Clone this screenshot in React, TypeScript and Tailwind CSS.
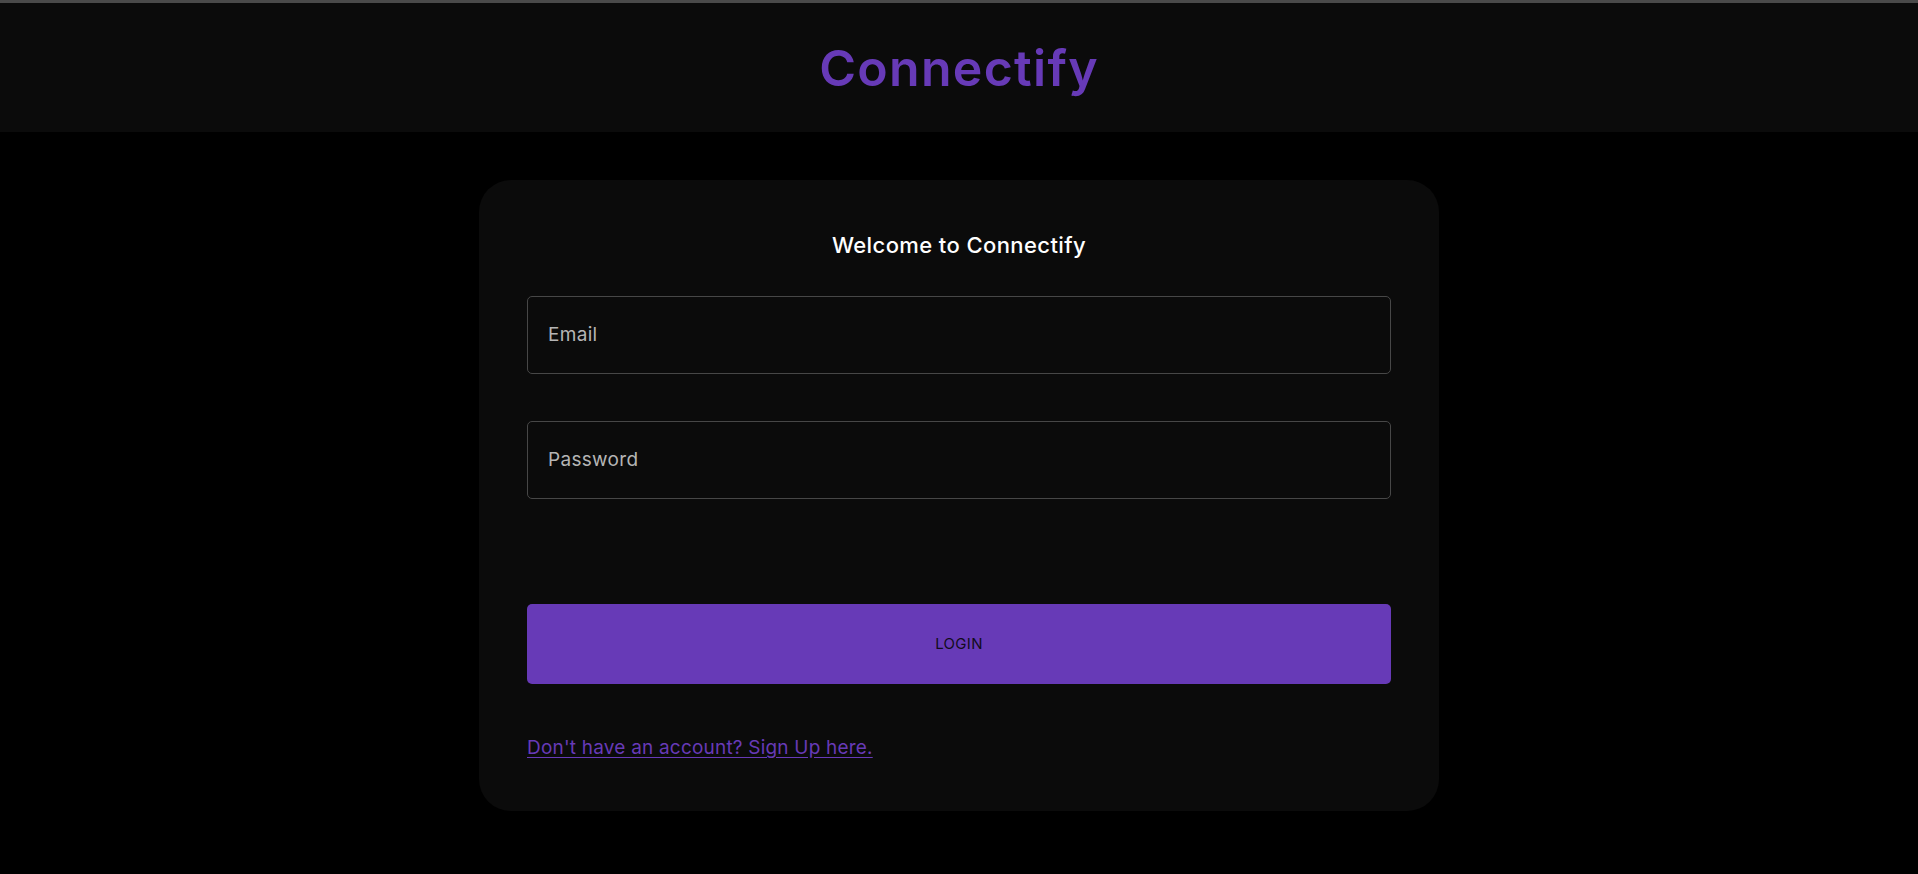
import React from "react";

export default function App() {
  return (
    <div className="min-h-[874px] w-full bg-black" style={{ fontFamily: "Inter, 'Noto Sans', sans-serif" }}>
      <header className="h-[132px] w-full border-t-[3px] border-[#4a4a4a] bg-[#0b0b0b] flex items-center justify-center">
        <h1 className="text-[50px] font-semibold tracking-[1.3px] text-[#673ab7] leading-none mt-[1px]">Connectify</h1>
      </header>
      <main className="flex justify-center pt-[48px]">
        <div className="w-[960px] h-[631px] rounded-[32px] bg-[#0b0b0b] px-[48px] pt-[50px]">
          <h2 className="text-center text-[22px] font-medium tracking-[0.4px] text-white leading-[30px]">Welcome to Connectify</h2>
          <div className="mt-[36px] h-[78px] rounded-[5px] border border-[#474747] flex items-center px-[20px]">
            <span className="text-[19px] tracking-[0.3px] text-[#b5b5b5]">Email</span>
          </div>
          <div className="mt-[47px] h-[78px] rounded-[5px] border border-[#474747] flex items-center px-[20px]">
            <span className="text-[19px] tracking-[0.3px] text-[#b5b5b5]">Password</span>
          </div>
          <button className="mt-[105px] h-[80px] w-full rounded-[5px] bg-[#673ab7] flex items-center justify-center">
            <span className="text-[15px] text-[#120c1c] tracking-[0.3px]">LOGIN</span>
          </button>
          <div className="mt-[50px]">
            <a href="#" className="text-[19px] tracking-[0.2px] text-[#673ab7] underline underline-offset-[3px]">Don't have an account? Sign Up here.</a>
          </div>
        </div>
      </main>
    </div>
  );
}
